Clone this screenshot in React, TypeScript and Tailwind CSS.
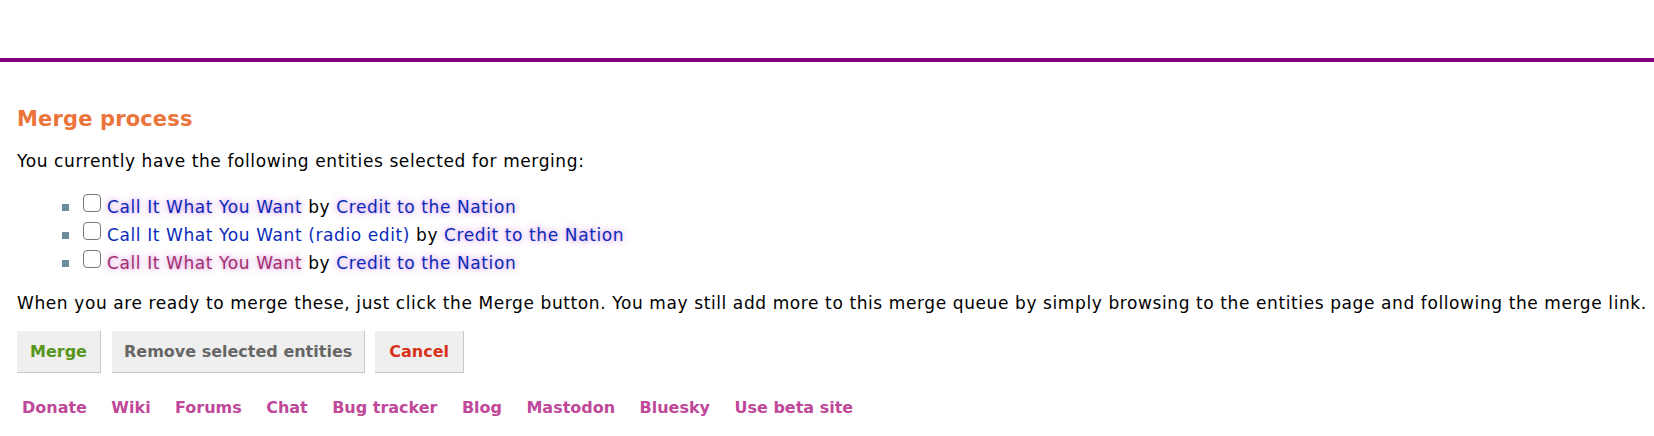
import { useState } from "react";

type Entity = {
  title: string;
  artist: string;
  titleGlow: boolean;
  visited: boolean;
};

const entities: Entity[] = [
  { title: "Call It What You Want", artist: "Credit to the Nation", titleGlow: true, visited: false },
  { title: "Call It What You Want (radio edit)", artist: "Credit to the Nation", titleGlow: false, visited: false },
  { title: "Call It What You Want", artist: "Credit to the Nation", titleGlow: true, visited: true },
];

const footerLinks = ["Donate", "Wiki", "Forums", "Chat", "Bug tracker", "Blog", "Mastodon", "Bluesky", "Use beta site"];

const glow = "[text-shadow:0_0_8px_#d08ad8,0_0_3px_#ebcaf0]";

const App = () => {
  const [checked, setChecked] = useState<boolean[]>([false, false, false]);

  return (
    <div className="w-full h-[436px] bg-white text-black font-['DejaVu_Sans','Verdana',sans-serif] text-[17px] tracking-[0.6px] leading-[20px] overflow-hidden">
      <div className="h-[58px]" />
      <div className="h-[4px] bg-[#800080]" />

      <div className="pl-[17px]">
        <h2 className="mt-[45px] text-[21px] leading-[24px] tracking-[0.15px] font-bold text-[#eb743b]">Merge process</h2>
        <p className="mt-[20px]">You currently have the following entities selected for merging:</p>

        <ul className="mt-[22px]">
          {entities.map((e, i) => (
            <li key={i} className="leading-[28px] pl-[45px] whitespace-nowrap">
              <span className="inline-block w-[7px] h-[7px] bg-[#6b8d9b] mb-[2px] align-baseline" />
              <span
                onClick={() => setChecked(checked.map((c, j) => (j === i ? !c : c)))}
                className={`inline-block w-[18px] h-[18px] ml-[14px] mr-[6px] mb-[1px] align-baseline rounded-[4px] border-[1.5px] border-[#777] ${checked[i] ? "bg-[#0a2bbb]" : "bg-white"}`}
              />
              <a
                href="#"
                className={`${e.visited ? "text-[#a4306d]" : "text-[#0a2bbb]"} ${e.titleGlow ? glow : ""}`}
              >
                {e.title}
              </a>{" "}
              by{" "}
              <a href="#" className={`text-[#0a2bbb] ${glow}`}>
                {e.artist}
              </a>
            </li>
          ))}
        </ul>

        <p className="mt-[16px] whitespace-nowrap">
          When you are ready to merge these, just click the Merge button. You may still add more to this merge queue by simply
          browsing to the entities page and following the merge link.
        </p>

        <div className="mt-[18px] flex font-bold text-[16px] tracking-normal">
          <button className="h-[42px] px-[13px] flex items-center bg-[#efefef] border-r border-b border-[#c9c9c9] text-[#57961c]">
            Merge
          </button>
          <button className="ml-[11px] h-[42px] px-[12px] flex items-center bg-[#efefef] border-r border-b border-[#c9c9c9] text-[#666666]">
            Remove selected entities
          </button>
          <button className="ml-[10px] h-[42px] px-[14px] flex items-center bg-[#efefef] border-r border-b border-[#c9c9c9] text-[#d8321a]">
            Cancel
          </button>
        </div>

        <div className="mt-[25px] pl-[5px] flex gap-[24.4px] font-bold text-[16px] tracking-normal text-[#c0489a]">
          {footerLinks.map((l) => (
            <a key={l} href="#">
              {l}
            </a>
          ))}
        </div>
      </div>
    </div>
  );
};

export default App;
